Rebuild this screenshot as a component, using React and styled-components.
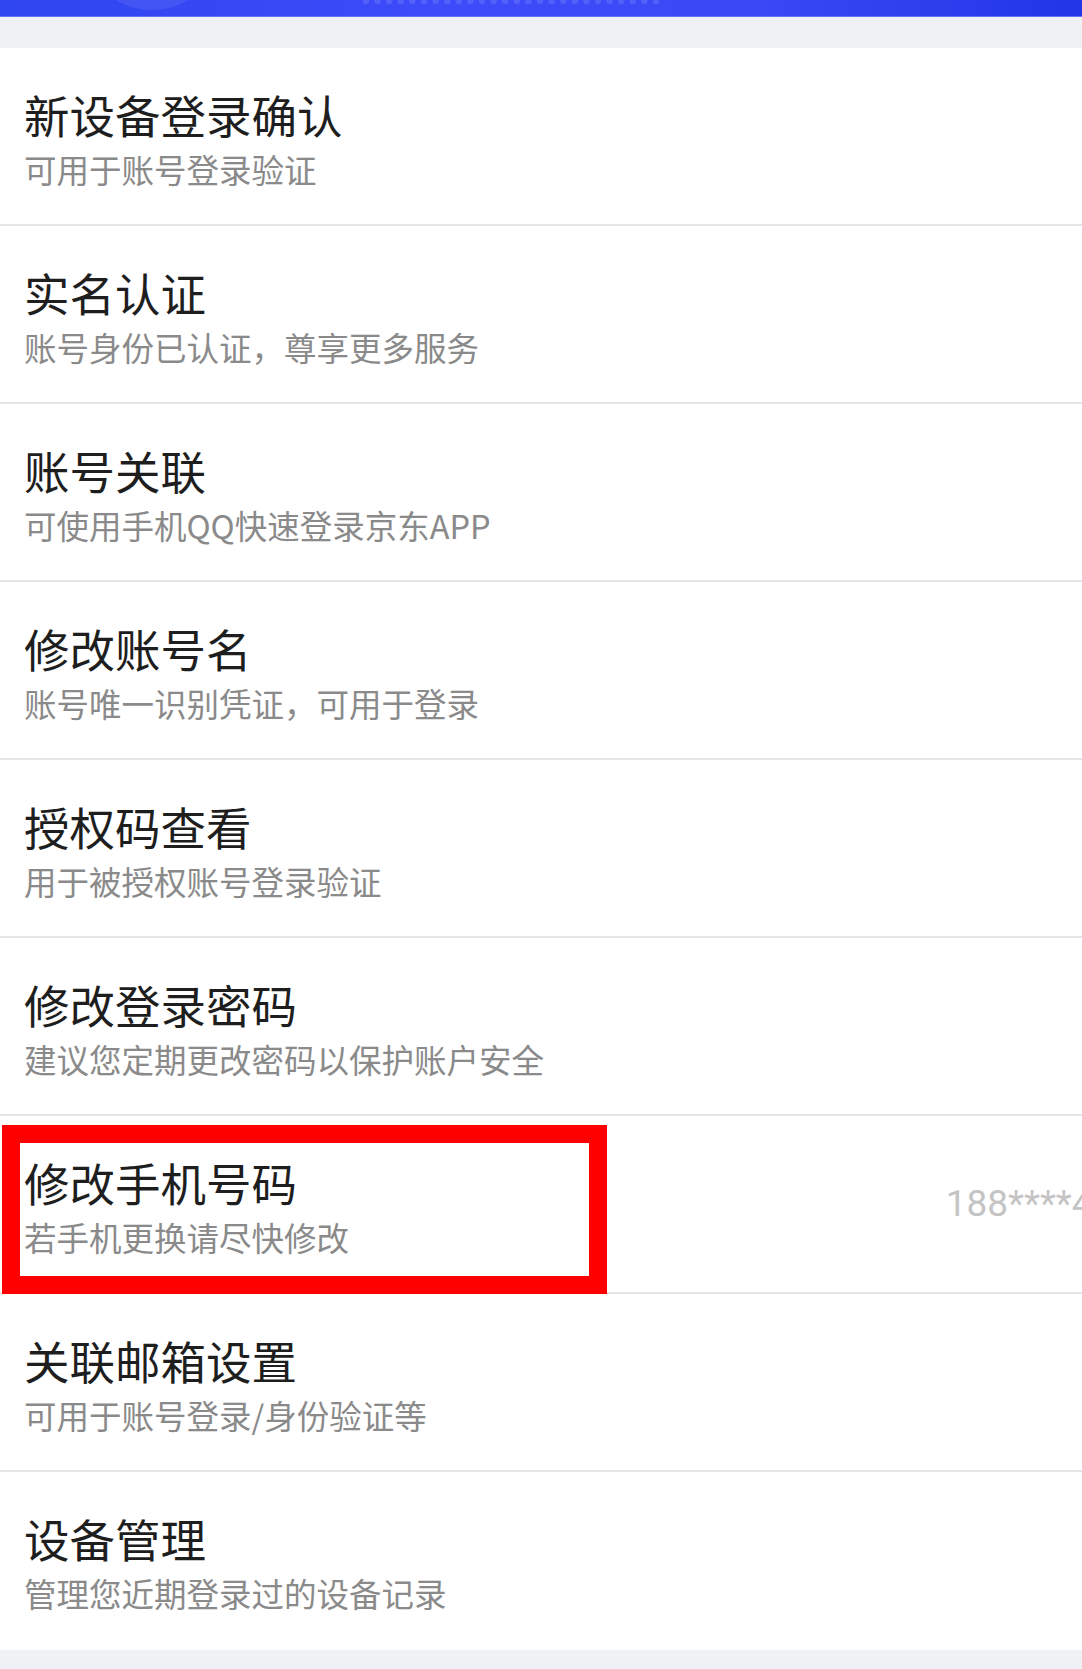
import React from 'react';
import styled, { createGlobalStyle } from 'styled-components';

const GlobalStyle = createGlobalStyle`
  html, body {
    margin: 0;
    padding: 0;
    background: #f0f1f5;
    overflow-x: hidden;
  }
  body {
    font-family: "Noto Sans CJK SC", "Noto Sans", sans-serif;
  }
`;

const items = [
  { title: '新设备登录确认', desc: '可用于账号登录验证' },
  { title: '实名认证', desc: '账号身份已认证，尊享更多服务' },
  { title: '账号关联', desc: '可使用手机QQ快速登录京东APP' },
  { title: '修改账号名', desc: '账号唯一识别凭证，可用于登录' },
  { title: '授权码查看', desc: '用于被授权账号登录验证' },
  { title: '修改登录密码', desc: '建议您定期更改密码以保护账户安全' },
  { title: '修改手机号码', desc: '若手机更换请尽快修改', value: '188****4567', marked: true },
  { title: '关联邮箱设置', desc: '可用于账号登录/身份验证等' },
  { title: '设备管理', desc: '管理您近期登录过的设备记录' },
];

function HeaderArt() {
  const dots = [];
  for (let i = 0; i < 26; i++) {
    dots.push(<circle key={i} cx={366 + i * 11.6} cy={1} r={3.2} fill="#ffffff" fillOpacity="0.12" />);
  }
  return (
    <svg width="1082" height="17" viewBox="0 0 1082 17" style={{ display: 'block' }}>
      <circle cx="152" cy="-62" r="72" fill="#ffffff" fillOpacity="0.08" />
      {dots}
    </svg>
  );
}

function App() {
  return (
    <Page>
      <GlobalStyle />
      <TopBar>
        <HeaderArt />
      </TopBar>
      <List>
        {items.map((item) => (
          <Row key={item.title}>
            <TextBlock>
              <Title>{item.title}</Title>
              <Desc>{item.desc}</Desc>
            </TextBlock>
            {item.value && <Value>{item.value}</Value>}
            {item.marked && <Mark />}
          </Row>
        ))}
      </List>
    </Page>
  );
}

const Page = styled.div`
  width: 1082px;
  min-height: 1669px;
  background: #f0f1f5;
  overflow: hidden;
`;

const TopBar = styled.div`
  height: 17px;
  background: linear-gradient(90deg, #2f45ee 0%, #3d4bfa 40%, #3a48f6 70%, #2236e6 100%);
  border-bottom: 1px solid #6070f7;
  box-sizing: border-box;
  overflow: hidden;
`;

const List = styled.div`
  margin-top: 31px;
  background: #ffffff;
  display: flex;
  flex-direction: column;
`;

const Row = styled.div`
  position: relative;
  height: 178px;
  box-sizing: border-box;
  display: flex;
  align-items: flex-start;
  justify-content: space-between;
  padding: 44px 0 0 24px;
  border-bottom: 2px solid #e5e5e7;

  &:last-child {
    border-bottom: none;
  }
`;

const TextBlock = styled.div`
  display: flex;
  flex-direction: column;
`;

const Title = styled.div`
  font-size: 45.5px;
  line-height: 45px;
  color: #1e1e1e;
  white-space: nowrap;
`;

const Desc = styled.div`
  margin-top: 15px;
  font-size: 32.5px;
  line-height: 33px;
  color: #8a8a8a;
  white-space: nowrap;
`;

const Value = styled.div`
  flex-shrink: 0;
  align-self: center;
  margin-top: -46px;
  margin-right: -73px;
  font-family: Roboto, "Liberation Sans", sans-serif;
  font-size: 37px;
  color: #c4c4c4;
  white-space: nowrap;
`;

const Mark = styled.div`
  position: absolute;
  left: 2px;
  top: 9px;
  width: 605px;
  height: 169px;
  box-sizing: border-box;
  border: 18px solid #ff0000;
  pointer-events: none;
`;

export default App;
